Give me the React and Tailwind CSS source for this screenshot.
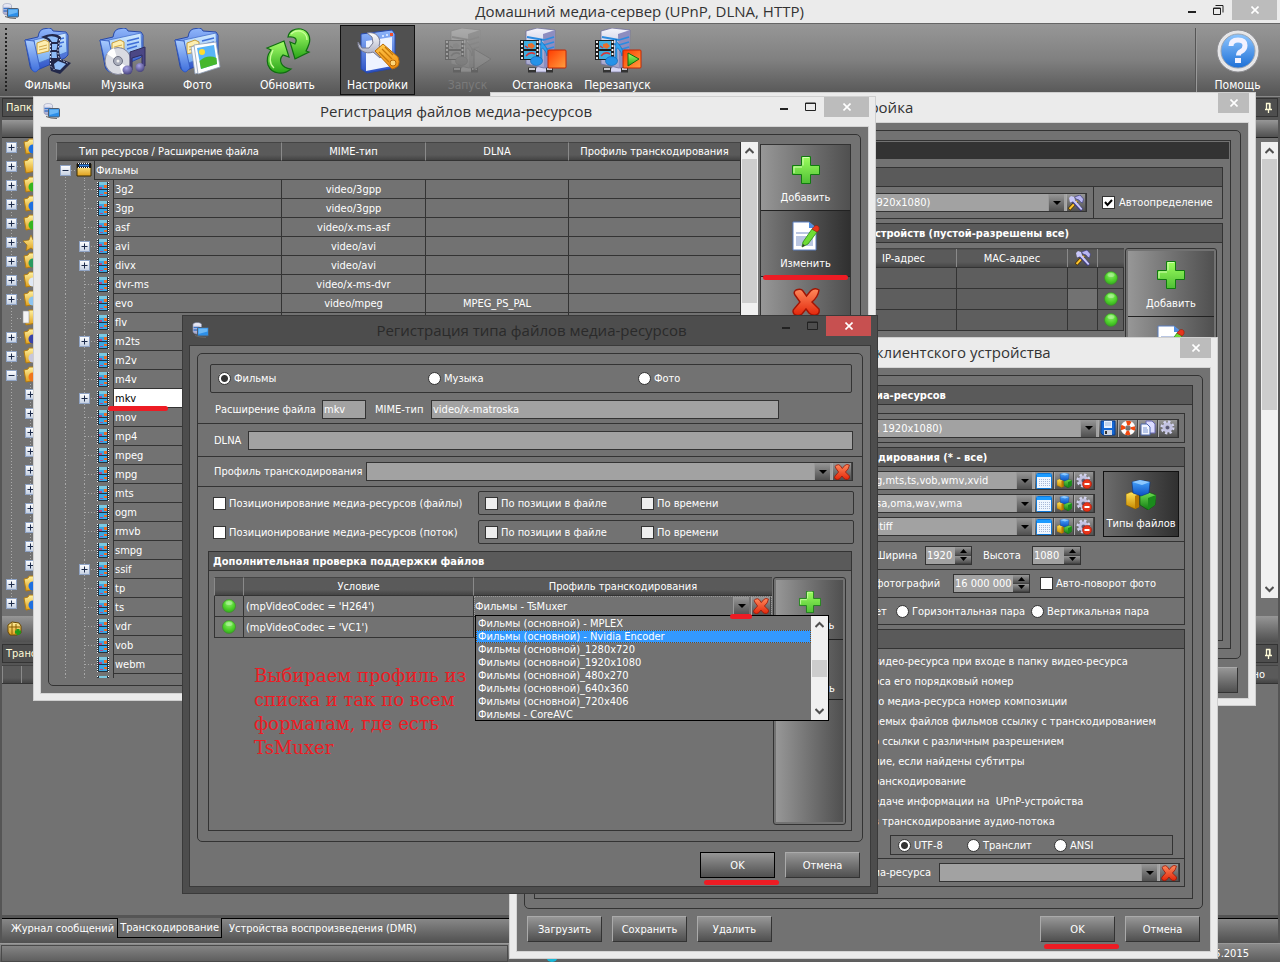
import React from "react";

/* ---------- shared gradients ---------- */

function Gradients() {
  const stops = (id, a, b, x2 = "0", y2 = "1") => (
    <linearGradient id={id} x1="0" y1="0" x2={x2} y2={y2}>
      <stop offset="0" stopColor={a} />
      <stop offset="1" stopColor={b} />
    </linearGradient>
  );
  return (
    <svg className="absolute size-0" aria-hidden="true">
      <defs>
        {stops("gBlue", "#a9ccff", "#3f6fdc")}
        {stops("gBlueSide", "#8fb6fb", "#2b50c4")}
        {stops("gSheet", "#d5ecff", "#6fa8f2")}
        {stops("gGreen", "#a6ff6b", "#27a417")}
        {stops("gRed", "#ff8a5c", "#e2260a")}
        {stops("gStop", "#ff3b00", "#ffa040", "1", "1")}
        {stops("gMetal", "#ffffff", "#9da0b8")}
        {stops("gTower", "#f4f4fb", "#9fa0c8")}
        {stops("gGold", "#fff2a0", "#e0a01c")}
        {stops("gOrange", "#ffc94d", "#ef8a0c")}
        {stops("gHelp", "#8ec6ff", "#1d6fd6")}
        {stops("gCubeB", "#4aa8ff", "#0b4fc0")}
        {stops("gCubeY", "#ffe25a", "#c98a00")}
        {stops("gCubeG", "#6fe052", "#117a12")}
        {stops("gPlus", "#9cff5e", "#4fbf35")}
        {stops("gBox", "#ffffff", "#c3cfe2")}
        <radialGradient id="gBall" cx=".5" cy=".3" r=".7">
          <stop offset="0" stopColor="#8cec6c" />
          <stop offset=".6" stopColor="#4ed12a" />
          <stop offset="1" stopColor="#35a820" />
        </radialGradient>
        <radialGradient id="gNote" cx=".4" cy=".3" r=".8">
          <stop offset="0" stopColor="#a8a4e8" />
          <stop offset="1" stopColor="#3b376f" />
        </radialGradient>
      </defs>
    </svg>
  );
}

/* ---------- icons ---------- */

const AppIcon = () => (
  <svg width="17" height="17" viewBox="0 0 17 17" aria-hidden="true">
    <path d="M1 2.500c0-2.500 8.500-2.500 8.500 0v8c0 2.500-8.500 2-8.500-1z" fill="url(#gTower)" stroke="#8a93b4" strokeWidth=".6" />
    <path d="M1.500 5.500h6M1.500 8h5" stroke="#3b74c8" strokeWidth="1.400" />
    <rect x="5.500" y="5.500" width="11" height="8.500" rx="1" fill="#2d8fe8" stroke="#4e5d6e" />
    <path d="M6.500 6.500h9v3l-9 2.500z" fill="#6cb8f6" />
    <path d="M3 13.500l5 1.500 6 .5" fill="none" stroke="#666" />
  </svg>
);

const FolderShape = () => (
  <>
    <path d="M1 12l13-3 1-4q1-3 4-4l6-1q3 0 4 3l13 1 2 3v20l-3 3-30 13q-4 0-5-5z" fill="url(#gBlueSide)" stroke="#2748a8" />
    <path d="M10 12l32-7 1 19-31 12z" fill="url(#gSheet)" stroke="#4470cc" strokeWidth=".8" />
    <path d="M13 15l8-3 4 2v9l-12 3z" fill="#fdeeb0" stroke="#c79c3a" />
    <path d="M15 19l8-2M15 22l8-2" stroke="#d2aa4c" />
    <path d="M28 13l12-3M28 17l12-3M28 21l10-3" stroke="#3f6fd8" strokeWidth="1.400" />
    <path d="M1 12l9 1 6 27-4 4q-4 0-5-5z" fill="url(#gBlue)" stroke="#2f56bd" strokeWidth=".8" />
  </>
);

const FilmsIcon = () => (
  <svg width="48" height="48" viewBox="0 0 48 48" aria-hidden="true">
    <FolderShape />
    <path d="M17 9q13-6 20 0c-2 9-3 14 0 22l10 4-11 11-9-3c-3-10 0-18-1-28-2-4-5-4-9-6z" fill="#22284a" />
    <path d="M23 9q6-2 11 1l-1 4h-5q-1-3-5-5zM28 16h5.500l-1 6H28zM27.500 24h5l.5 6h-5.500zM30 36l4-3 8 3-6 6-5-1z" fill="#8fbdf8" />
    <path d="M26.500 14v24l5 5M35.500 11c-1 9-3 13 0 20l8 4" fill="none" stroke="#dfe8ff" strokeWidth="1" strokeDasharray="1.500 2" />
  </svg>
);

const MusicIcon = () => (
  <svg width="48" height="48" viewBox="0 0 48 48" aria-hidden="true">
    <FolderShape />
    <ellipse cx="19" cy="33" rx="13" ry="13.500" fill="#d9dbe2" stroke="#83869a" />
    <path d="M19 33L8 26a13 13 0 0 1 7-6zM19 33l11 7a13 13 0 0 1-7 6z" fill="#fff" />
    <circle cx="19" cy="33" r="4.500" fill="#a8acba" stroke="#6c7082" />
    <circle cx="19" cy="33" r="1.500" fill="#eee" />
    <path d="M31 24l15-5v19h-3V27l-10 3v12h-2z" fill="#4b4785" stroke="#302d5c" />
    <ellipse cx="28.500" cy="42" rx="5" ry="4.500" fill="url(#gNote)" />
    <ellipse cx="41" cy="39.500" rx="4.500" ry="4.500" fill="url(#gNote)" />
  </svg>
);

const PhotoIcon = () => (
  <svg width="48" height="48" viewBox="0 0 48 48" aria-hidden="true">
    <FolderShape />
    <path d="M17 19l6-2 4 27-6 2z" fill="#f4f7fb" stroke="#8fa0b8" strokeWidth=".8" />
    <path d="M20 17l22-3 4 25-22 7z" fill="#fff" stroke="#8fa0b8" strokeWidth=".8" />
    <path d="M23 20l17-3 3 19-16 5z" fill="#58b4f8" />
    <path d="M25.500 33q8-7 17-3l.5 6-16 5z" fill="#46b72c" />
    <circle cx="28" cy="24" r="3" fill="#ffdc2e" />
  </svg>
);

const RefreshIcon = () => (
  <svg width="48" height="48" viewBox="0 0 48 48" aria-hidden="true">
    <path d="M24 9C25 3 31 0 37 1c8 2 10 9 8 15-1 3-2 5-3 7l3 1-14 7-5-17 5 2c3-5 0-8-7-7z" fill="url(#gGreen)" stroke="#0f6d10" strokeWidth="1.200" />
    <path d="M27 6q4-4 9-3 7 2 7 9" fill="none" stroke="#caff9c" strokeWidth="1.300" />
    <path d="M27 41c-7 6-19 6-23-4-2-6 0-11 3-15l-4-2 17-7 5 16-6-2c-5 5-2 13 8 14z" fill="url(#gGreen)" stroke="#0f6d10" strokeWidth="1.200" />
    <path d="M9 22q-6 12 1 18" fill="none" stroke="#caff9c" strokeWidth="1.300" />
  </svg>
);

const SettingsIcon = () => (
  <svg width="48" height="48" viewBox="0 0 48 48" aria-hidden="true">
    <path d="M7 6l31-4 3 4v34l-28 5-6-4z" fill="url(#gBlueSide)" stroke="#2748a8" />
    <path d="M12 13l26-4v29l-26 5z" fill="#eef3ff" />
    <path d="M28 8l2 0M32 7h2" stroke="#cfe0ff" strokeWidth="2" />
    <path d="M36 6.500h3" stroke="#f0502c" strokeWidth="3" />
    <path d="M4 14l4 6h7l4-5-1-6-5-4c9-2 15 5 12 13l6 6-5 6-7-6C12 27 3 22 4 14z" fill="url(#gMetal)" stroke="#777a90" />
    <path d="M21 23l8-7 15 13q4 10-6 12z" fill="url(#gOrange)" stroke="#b86a06" />
    <path d="M25 24l10 10M28 21l10 10M31 19l8 8" stroke="#c67808" strokeWidth="1.300" />
    <circle cx="39" cy="35" r="3" fill="#ffd778" stroke="#b86a06" />
  </svg>
);

const ServerIcon = ({ badge }) => (
  <svg width="48" height="48" viewBox="0 0 48 48" aria-hidden="true" className={badge === "run" ? "opacity-25 grayscale" : ""}>
    <path d="M14 40h4v-3h8v3h4v4H12v-4z" fill="#d6d6f4" stroke="#77779c" strokeWidth=".7" />
    <path d="M9 42h8M27 42h7" stroke="#333" strokeWidth="5" />
    <path d="M10 41h6M28 41h5" stroke="#c9c9d0" strokeWidth="2" />
    <path d="M7 3l11-3 18 2-1 35-10 3-18-4z" fill="url(#gTower)" stroke="#70709c" strokeWidth=".8" />
    <path d="M24 6l12-4-1 35-10 3z" fill="#8d8dc0" />
    <path d="M8 9l17 3M8 14l17 3M25 12l10-3M25 17l10-3M25 22l10-3" stroke="#2b8be0" strokeWidth="1.800" />
    <path d="M1 12h19v20H1z" fill="#1d1d1d" />
    <path d="M3 13v18M18.500 13v18" stroke="#fff" strokeWidth="1.800" strokeDasharray="2 2" />
    <path d="M5 13h12v8H5zM5 23h12v8H5z" fill="#3faee0" />
    <path d="M9 16l4-1 3 3-3 3-4-2z" fill="#e8702c" />
    <path d="M6 18l3 2M7 28q4-5 9-2" stroke="#d33a3a" strokeWidth="1.500" fill="none" />
    <path d="M22 11c1 6 9 8 6 17-1-5-3-7-5-8v13h-2z" fill="#2ea2f0" stroke="#0e62ac" strokeWidth=".6" />
    <ellipse cx="17.500" cy="33" rx="6" ry="4.500" fill="#2592e8" stroke="#0e62ac" strokeWidth=".6" />
    {badge === "run" && <path d="M30 21l17 10-17 11z" fill="#aaa" stroke="#555" />}
    {badge !== "run" && <rect x="29" y="22" width="18" height="18" rx="1" fill="url(#gStop)" stroke="#c22606" />}
    {badge === "restart" && <path d="M34 25l11 6-11 7z" fill="url(#gGreen)" stroke="#0f6d10" />}
  </svg>
);

const HelpIcon = () => (
  <svg width="46" height="46" viewBox="0 0 46 46" aria-hidden="true">
    <circle cx="23" cy="23" r="21" fill="#e6e6e8" stroke="#8c8c90" />
    <circle cx="23" cy="23" r="17" fill="url(#gHelp)" stroke="#9aa4b2" />
    <path d="M16 18q0-6 7-6t7 5.500q0 4-4 6-2.500 1-2.500 4" fill="none" stroke="#f2f2ff" strokeWidth="5" />
    <rect x="20" y="30" width="6" height="5" fill="#f2f2ff" />
  </svg>
);

const PlusIcon = ({ size = 28 }) => (
  <svg width={size} height={size} viewBox="0 0 28 28" aria-hidden="true">
    <path d="M9.500 .5h9v9h9v9h-9v9h-9v-9h-9v-9h9z" fill="url(#gPlus)" stroke="#107a10" />
    <path d="M11 9.500v-8h6M2 17v-6h8" fill="none" stroke="#d5ffb4" />
  </svg>
);

const EditIcon = () => (
  <svg width="28" height="30" viewBox="0 0 28 30" aria-hidden="true">
    <path d="M1 1h16l7 6v22H1z" fill="#fff" stroke="#5b7fc0" />
    <path d="M17 1l7 6h-7z" fill="#4f8de0" />
    <path d="M4 11h14v2H4zM4 15h17v10H4z" fill="#b9c6e2" />
    <path d="M11 21l9-13 5 3-9 12-6 3z" fill="#6fdc34" stroke="#2a8a12" strokeWidth=".8" />
    <path d="M20 8q4-6 7-2 1 3-2 5z" fill="#e6351c" stroke="#9c1c0a" strokeWidth=".6" />
    <path d="M10 26l1-3 2 1.500z" fill="#333" />
  </svg>
);

const DeleteIcon = ({ size = 28 }) => (
  <svg width={size} height={size} viewBox="0 0 28 28" aria-hidden="true">
    <path
      d="M4 2q5-2 7 1l3.500 5 4-5q4-4 8.500-1-1 7-7 12l7 7q1 5-3 6-4 1-7-2l-3-4-4 5q-4 3-8 0-2-3 0-5l6-7-5-7q-2-3 1-5z"
      fill="url(#gRed)"
      stroke="#a01404"
      strokeWidth="1.400"
    />
  </svg>
);

const ToolsIcon = () => (
  <svg width="16" height="16" viewBox="0 0 16 16" aria-hidden="true">
    <path d="M1 14.500L9 6" stroke="#4a3300" strokeWidth="3.500" />
    <path d="M1.500 14L9 6" stroke="#ffc52e" strokeWidth="2" />
    <path d="M6.500 2l5.500-2 3.500 4-1 4-2-1-1.500-2-3-1z" fill="#b8b6f2" stroke="#3f3d80" strokeWidth=".7" />
    <path d="M4 5l10 10" stroke="#3f3d80" strokeWidth="3.500" />
    <path d="M1 3l2-2 3 1 1 3 7.500 9-1.500 1-8-8.500-3 1z" fill="#c9c8fa" />
  </svg>
);

const SaveIcon = () => (
  <svg width="16" height="16" viewBox="0 0 16 16" aria-hidden="true">
    <path d="M1 1h14v14H3l-2-2z" fill="#1467d4" stroke="#0a3c8a" />
    <path d="M4 1h8v7H4z" fill="#e6f1ff" />
    <path d="M5 3h6M5 5h6" stroke="#9fb8dc" />
    <path d="M4 10h8v5H4z" fill="#cfd6e4" />
    <path d="M5 11h2v3H5z" fill="#333" />
  </svg>
);

const LifebuoyIcon = () => (
  <svg width="16" height="16" viewBox="0 0 16 16" aria-hidden="true">
    <circle cx="8" cy="8" r="5" fill="none" stroke="#fff" strokeWidth="4.500" />
    <circle cx="8" cy="8" r="5" fill="none" stroke="#f2480e" strokeWidth="4.500" strokeDasharray="4 3.850" strokeDashoffset="2" />
  </svg>
);

const CopyIcon = () => (
  <svg width="16" height="16" viewBox="0 0 16 16" aria-hidden="true">
    <path d="M6 1h6l3 3v9H6z" fill="#dcdcff" stroke="#6b69b4" />
    <path d="M1 4h6l3 3v8H1z" fill="#f3f6ff" stroke="#4d68ad" />
    <path d="M3 8h4M3 10h5M3 12h5" stroke="#7b96d4" />
  </svg>
);

const GearIcon = ({ minus }) => (
  <svg width="16" height="16" viewBox="0 0 16 16" aria-hidden="true">
    <circle cx="7.500" cy="7.500" r="5.500" fill="none" stroke="#d4d4f0" strokeWidth="3" strokeDasharray="2.200 2.100" />
    <circle cx="7.500" cy="7.500" r="3.600" fill="none" stroke="#c3c3e2" strokeWidth="3" />
    <circle cx="7.500" cy="7.500" r="1.500" fill="#55557a" />
    {minus && <circle cx="11" cy="11" r="4.500" fill="#e8351a" stroke="#a81806" strokeWidth=".6" />}
    {minus && <path d="M8.500 11h5" stroke="#fff" strokeWidth="2" />}
  </svg>
);

const CalendarIcon = () => (
  <svg width="16" height="16" viewBox="0 0 16 16" aria-hidden="true">
    <rect x=".5" y=".5" width="15" height="15" rx="1" fill="#eef6ff" stroke="#0f78d8" />
    <path d="M1 1h14v3H1z" fill="#1b9bff" />
    <path d="M3 6.500h11M3 8.500h11M3 10.500h11M3 12.500h11" stroke="#a9b9d8" strokeDasharray="1 1" />
  </svg>
);

const CubesIcon = ({ size = 16 }) => (
  <svg width={size} height={size} viewBox="0 0 30 30" aria-hidden="true">
    <path d="M0 14l5-2 8 2v13l-4 2-9-4z" fill="url(#gCubeY)" stroke="#7a5600" strokeWidth=".6" />
    <path d="M9 16l4-2v13l-4 2z" fill="#b87800" />
    <path d="M14 15l8-3 8 3-1 10-7 5-8-5z" fill="url(#gCubeG)" stroke="#0a4a0a" strokeWidth=".6" />
    <path d="M22 18l8-3-1 10-7 5z" fill="#1a8a1c" />
    <path d="M6 2l8-2 10 2-1 11-8 3-8-3z" fill="url(#gCubeB)" stroke="#052f80" strokeWidth=".6" />
    <path d="M6 2l8-2 10 2-8 3z" fill="#8cc8ff" />
  </svg>
);

const BallIcon = () => (
  <svg width="14" height="14" viewBox="0 0 14 14" aria-hidden="true">
    <circle cx="7" cy="7" r="6.500" fill="url(#gBall)" stroke="#3d8a2c" strokeWidth=".6" />
    <ellipse cx="7" cy="4" rx="3.500" ry="2" fill="#d8ffc8" opacity=".4" />
  </svg>
);

const PinIcon = () => (
  <svg width="9" height="11" viewBox="0 0 9 11" aria-hidden="true">
    <path d="M2.500 7V1.500h3V7M1 7.500h7M4.500 8v3M6 1v6" fill="none" stroke="#fffbd8" strokeWidth="1.300" />
  </svg>
);

const Chevron = ({ down }) => (
  <svg width="9" height="7" viewBox="0 0 9 7" aria-hidden="true">
    <path d={down ? "M.5 1l4 4 4-4" : "M.5 6l4-4 4 4"} fill="none" stroke="#505050" strokeWidth="2" />
  </svg>
);

const Expander = ({ x, y, open }) => (
  <g>
    <rect x={x - 5} y={y - 5} width="10" height="10" fill="url(#gBox)" stroke="#8fa3c4" />
    <path d={`M${x - 3} ${y}h6${open ? "" : `M${x} ${y - 3}v6`}`} stroke="#1d2b4a" strokeWidth="1" fill="none" />
  </g>
);

/* ---------- small controls ---------- */

const TEXT = "font-['DejaVu_Sans_Condensed','DejaVu_Sans',sans-serif] text-[11px] leading-[13px] text-white";
const STEEL = "bg-linear-to-b from-[#979797] to-[#505050]";
const CHECK =
  "size-[13px] shrink-0 appearance-none border border-[#333] checked:bg-[linear-gradient(45deg,transparent_40%,#000_40%,#000_55%,transparent_55%)]";
const RADIO =
  "size-[13px] shrink-0 appearance-none rounded-full border border-[#333] bg-white checked:bg-[radial-gradient(circle,#333_0_3px,#fff_4px)]";

const Radio = ({ name, label, defaultChecked, className = "" }) => (
  <label className={`flex items-center gap-[3px] whitespace-nowrap ${className}`}>
    <input type="radio" name={name} defaultChecked={defaultChecked} className={RADIO} />
    {label}
  </label>
);

const Check = ({ label, dim, className = "" }) => (
  <label className={`flex items-center gap-[3px] whitespace-nowrap ${className}`}>
    <input type="checkbox" className={`${CHECK} ${dim ? "bg-[#eee]" : "bg-white"}`} />
    {label}
  </label>
);

const Mini = ({ label, children }) => (
  <button type="button" aria-label={label} className={`flex w-[20px] shrink-0 items-center justify-center self-stretch border-x border-l-[#aaa] border-r-[#444] ${STEEL}`}>
    {children}
  </button>
);

const Combo = ({ value, label, id, children, className = "" }) => (
  <div className={`flex h-[19px] border border-[#333] bg-[#a2a2a2] ${className}`}>
    <select id={id} aria-label={label} className="min-w-0 flex-1 appearance-none bg-transparent pl-1 leading-[13px] outline-none">
      <option>{value}</option>
    </select>
    <Arrow />
    {children}
  </div>
);

const Arrow = () => (
  <span className={`mr-[2px] flex w-[16px] shrink-0 items-center justify-center border-l border-[#999] ${STEEL}`}>
    <svg width="8" height="4" viewBox="0 0 8 4" aria-hidden="true">
      <path d="M0 0h8L4 4z" fill="#000" />
    </svg>
  </span>
);

const Spin = ({ id, value, className }) => (
  <div className={`flex h-[19px] border border-[#333] bg-[#a2a2a2] ${className}`}>
    <input id={id} defaultValue={value} className="min-w-0 flex-1 bg-transparent pl-px outline-none" />
    <span className="flex w-[16px] shrink-0 flex-col">
      {["M0 4h7L3.500 0z", "M0 0h7L3.500 4z"].map((d) => (
        <span key={d} className={`flex flex-1 items-center justify-center border-b border-[#444] ${STEEL}`}>
          <svg width="7" height="4" viewBox="0 0 7 4" aria-hidden="true">
            <path d={d} />
          </svg>
        </span>
      ))}
    </span>
  </div>
);

const RedLine = ({ className }) => <span className={`absolute h-[5px] rounded-full bg-[#ed1c24] ${className}`} />;

const PushButton = ({ children, primary, line, wide }) => (
  <div className="relative shrink-0">
    <button
      type="button"
      className={`h-[26px] border ${wide ? "w-[90px]" : "w-[75px]"} ${
        primary ? "border-black" : "border-t-[#aaa] border-r-[#333] border-b-[#333] border-l-[#aaa]"
      } ${STEEL}`}
    >
      {children}
    </button>
    {line && <RedLine className="-bottom-[7px] left-1 w-[75px]" />}
  </div>
);

const SideButton = ({ icon, label, pressed, line, className }) => (
  <button
    type="button"
    className={`relative flex w-full shrink-0 flex-col items-center justify-between border-b border-[#222] bg-linear-to-r ${
      pressed ? "from-[#7a7a7a] to-[#303030]" : "from-[#979797] to-[#505050]"
    } ${className}`}
  >
    {icon}
    {label}
    {line && <RedLine className="-bottom-[4px] left-[2px] z-10 w-[85px]" />}
  </button>
);

const Scrollbar = ({ thumb, className = "" }) => (
  <div className={`flex shrink-0 flex-col items-center bg-[#f0f0f0] ${className}`}>
    <span className="flex h-[17px] shrink-0 items-center">
      <Chevron />
    </span>
    <span className="flex w-[15px] min-h-0 flex-1 flex-col">
      <span className={`bg-[#cdcdcd] ${thumb}`} />
    </span>
    <span className="flex h-[17px] shrink-0 items-center">
      <Chevron down />
    </span>
  </div>
);

const Controls = ({ full, restore, dark, wide }) => (
  <div className="flex items-start justify-end">
    {full && (
      <>
        <button type="button" aria-label="Свернуть" className="flex h-[20px] w-[27px] items-center justify-center">
          <span className="mt-[3px] h-[2px] w-[8px] bg-[#222]" />
        </button>
        <button type="button" aria-label="Развернуть" className="flex h-[20px] w-[27px] items-center justify-center">
          <svg width="11" height="10" viewBox="0 0 11 10" aria-hidden="true">
            {restore ? <path d="M.5 3h7v6.500h-7zM.5 3.500h7M2.500 .5h7.500v7" fill="none" stroke="#222" /> : <path d="M.5 1h10v7.500H.5zM.5 1.500h10" fill="none" stroke="#222" />}
          </svg>
        </button>
      </>
    )}
    <button
      type="button"
      aria-label="Закрыть"
      className={`flex h-[20px] items-center justify-center ${wide ? "w-[45px]" : "w-[31px]"} ${dark ? "bg-[#c75050]" : "bg-[#bcbcbc]"}`}
    >
      <svg width="8" height="8" viewBox="0 0 8 8" aria-hidden="true">
        <path d="M.5 .5l7 7M7.500 .5l-7 7" stroke="#fff" strokeWidth="1.600" />
      </svg>
    </button>
  </div>
);

const TITLE = "font-['Open_Sans','Noto_Sans',sans-serif] text-[15px] leading-[20px] whitespace-nowrap";

const Win = ({ title, icon, dark, full, className, children }) => (
  <section
    aria-label={title}
    className={`absolute flex flex-col border ${dark ? "border-[#3a3a3a] bg-[#4d4d4d]" : "border-[#cfcfcf] bg-[#ebebeb]"} ${className}`}
  >
    <header className={`grid h-[29px] shrink-0 grid-cols-[1fr_auto_1fr] pr-[6px] pl-[9px] ${dark ? "text-[#2a2a2a]" : "text-[#333]"}`}>
      <span className="pt-[6px]">{icon && <AppIcon />}</span>
      <h2 className={`pt-[4px] ${TITLE}`}>{title}</h2>
      <Controls full={full} dark={dark} wide={full} />
    </header>
    <div className={`mx-[6px] mb-[6px] flex min-h-0 flex-1 flex-col border bg-[#727272] p-[7px] ${dark ? "border-[#3a3a3a]" : "border-[#d4d4d4]"}`}>
      {children}
    </div>
  </section>
);

const GroupHead = ({ children, className = "" }) => (
  <h3 className={`h-[19px] shrink-0 border-b border-[#333] bg-[#5a5a5a] pt-[3px] font-bold whitespace-nowrap ${className}`}>{children}</h3>
);

const TH = "border-l border-l-[#8a8a8a] border-b border-b-[#333] border-t border-t-[#444] bg-linear-to-b from-[#5a5a5a] from-70% to-[#444] p-0 text-center font-normal";

/* ---------- main window ---------- */

const ToolButton = ({ icon, label, active, disabled, className = "" }) => (
  <button
    type="button"
    disabled={disabled}
    className={`flex h-[70px] w-[75px] shrink-0 flex-col items-center justify-between border pt-[2px] pb-[2px] text-[12px] leading-[14px] ${
      active ? "border-[#111] bg-[#505050]" : "border-transparent"
    } ${disabled ? "text-[#7a7a7a]" : ""} ${className}`}
  >
    {icon}
    {label}
  </button>
);

const FOLDER_BADGES = ["#1d6fe0", null, "#35b520", "#1d6fe0", "#35b520", "star", "#2a9a60", "#dfe8f4", "#8cc4f0", "doc", "#3a44a8", "#c8c8dc", "#f0761c"];

const SideTreeIcon = ({ badge, y }) =>
  badge === "star" ? (
    <path d={`M29 ${y - 7}l2 5 6 1-5 4 1 6-4-3-5 3 1-6-4-4 6-1z`} fill="url(#gGold)" stroke="#a8740c" strokeWidth=".7" />
  ) : (
    <g>
      <path d={`M22 ${y - 5}l4-1 1-2h7v13l-10 2z`} fill="url(#gGold)" stroke="#b47c10" />
      {badge === "doc" && <path d={`M21 ${y - 7}h6v12h-6z`} fill="#f4f4f4" stroke="#999" strokeWidth=".6" />}
      {badge && badge !== "doc" && <circle cx="31" cy={y + 2} r="4.500" fill={badge} />}
    </g>
  );

const SideTree = () => (
  <svg width="36" height="477" viewBox="0 0 36 477" aria-hidden="true">
    <path d="M9.500 8v460" stroke="#aaa" strokeDasharray="1 2" />
    <path d="M28.500 246v182" stroke="#aaa" strokeDasharray="1 2" />
    {FOLDER_BADGES.map((b, i) => (
      <g key={i}>
        <path d={`M15 ${9.5 + i * 19}h6`} stroke="#aaa" strokeDasharray="1 2" />
        {b !== "doc" && <Expander x={9.5} y={9.5 + i * 19} open={i === 12} />}
        <SideTreeIcon badge={b} y={9 + i * 19} />
      </g>
    ))}
    {Array.from({ length: 10 }, (_, i) => (
      <Expander key={i} x={28.5} y={256.5 + i * 19} />
    ))}
    {[446, 465].map((y) => (
      <g key={y}>
        <Expander x={9.5} y={y + 0.5} />
        <SideTreeIcon badge="#1d6fe0" y={y} />
      </g>
    ))}
  </svg>
);

const DockHead = ({ children }) => (
  <div className="flex h-[19px] shrink-0 items-center justify-between border border-[#333] bg-[#4e4e4e] pr-[4px] pl-[3px] text-[#fffbd8]">
    {children}
    <PinIcon />
  </div>
);

function MainWindow() {
  return (
    <main className="flex min-h-screen flex-col bg-[#555]">
      <header className="grid h-[24px] shrink-0 grid-cols-[1fr_auto_1fr] border-b border-[#666] bg-[#ebebeb] pr-[3px] pl-[2px] text-[#333]">
        <span className="pt-[3px]">
          <AppIcon />
        </span>
        <h1 className={`pt-px ${TITLE}`}>Домашний медиа-сервер (UPnP, DLNA, HTTP)</h1>
        <Controls full restore wide />
      </header>
      <nav className="flex h-[73px] shrink-0 items-start border-b border-[#888] bg-linear-to-b from-[#979797] via-[#808080] to-[#555] pt-px">
        <span className="mt-[3px] ml-[5px] h-[63px] w-[5px] border-l-2 border-dotted border-[#222]" />
        <ToolButton icon={<FilmsIcon />} label="Фильмы" />
        <ToolButton icon={<MusicIcon />} label="Музыка" />
        <ToolButton icon={<PhotoIcon />} label="Фото" />
        <ToolButton icon={<RefreshIcon />} label="Обновить" className="mx-[15px]" />
        <ToolButton icon={<SettingsIcon />} label="Настройки" active className="mr-[15px]" />
        <ToolButton icon={<ServerIcon badge="run" />} label="Запуск" disabled />
        <ToolButton icon={<ServerIcon badge="stop" />} label="Остановка" />
        <ToolButton icon={<ServerIcon badge="restart" />} label="Перезапуск" />
        <span className="mt-[3px] mr-[3px] ml-auto h-[66px] w-[2px] border-r border-[#999] bg-[#555]" />
        <ToolButton icon={<HelpIcon />} label="Помощь" className="mr-[5px]" />
      </nav>

      <div className="flex h-[545px] shrink-0 flex-col px-[2px] pt-px">
        <DockHead>Папки</DockHead>
        <div className={`mt-[3px] h-[18px] shrink-0 border-b border-[#222] ${STEEL}`} />
        <div className="flex min-h-0 flex-1 justify-between bg-[#727272]">
          <SideTree />
          <Scrollbar thumb="h-[251px]" className="mt-[4px] mb-[18px] w-[17px]" />
        </div>
        <div className={`flex h-[26px] shrink-0 items-center pl-[5px] ${STEEL}`}>
          <svg width="28" height="16" viewBox="0 0 28 16" aria-hidden="true">
            <path d="M1 4l4-3 7 1 2 3v7l-4 2H3l-2-3z" fill="url(#gGold)" stroke="#6b4800" />
            <path d="M2 6h11M5 2v11M9 3v10" stroke="#8a5c00" />
            <path d="M8 11h6M11 8v6" stroke="#1f9a1a" strokeWidth="3" />
            <rect x="26" y="4" width="2" height="9" fill="#c8922c" />
          </svg>
        </div>
      </div>

      <div className="flex min-h-[200px] flex-1 flex-col px-[2px] pt-[2px]">
        <DockHead>Транскодирование</DockHead>
        <div className="mt-[2px] flex h-[19px] shrink-0 items-center border-t border-b border-t-[#444] border-b-[#333] bg-linear-to-b from-[#5a5a5a] from-70% to-[#444] pr-[13px]">
          <span className="h-full w-[20px] border-x border-[#8a8a8a]" />
          <span className="ml-auto">Окончено</span>
        </div>
        <div className="flex-1 bg-[#727272]" />
        <div className="mt-[3px] flex h-[25px] shrink-0 items-start bg-linear-to-b from-[#8a8a8a] to-[#505050]">
          <button type="button" className="h-[20px] border-t border-black pr-[3px] pl-[9px]">
            Журнал сообщений
          </button>
          <button type="button" className="h-[20px] border-x border-b border-black bg-[#6a6a6a] px-[2px]">
            Транскодирование
          </button>
          <button type="button" className="h-[20px] flex-1 border-t border-black pl-[7px] text-left">
            Устройства воспроизведения (DMR)
          </button>
        </div>
      </div>
      <footer className="flex h-[19px] shrink-0 items-center border-t border-[#999] bg-linear-to-b from-[#8a8a8a] to-[#5c5c5c] pr-[31px]">
        <span className="ml-px h-[17px] w-[507px] border border-[#4a4a4a]" />
        <span className="ml-[38px] size-[12px] self-end rounded-full bg-[#19b8d8]" />
        <time className="ml-auto">23.05.2015</time>
      </footer>
    </main>
  );
}

/* ---------- device list window ---------- */

const StripFrame = ({ className, children }) => (
  <div className={`flex shrink-0 flex-col rounded-[3px] border border-[#333] bg-[#727272] p-[2px] ${className}`}>{children}</div>
);

function DevicesWindow() {
  return (
    <Win title="Настройка" className="top-[92px] left-[490px] h-[614px] w-[766px]">
      <div className="flex h-[529px] shrink-0 flex-col rounded-[5px] border border-[#333] p-[9px]">
        <div className="flex flex-1 flex-col border border-[#333]">
          <div className="m-px h-[17px] shrink-0 bg-[#333]" />
          <div className="mt-[7px] mr-[7px] ml-[7px] border border-[#333]">
            <GroupHead />
            <div className="flex h-[31px] items-stretch">
              <div className="flex flex-1 items-center pr-[6px] pl-[300px]">
                <Combo value=", 1920x1080)" label="Устройство по умолчанию" className="flex-1 pl-[35px]">
                  <Mini label="Настройки устройства">
                    <ToolsIcon />
                  </Mini>
                </Combo>
              </div>
              <label className="flex w-[129px] items-center gap-[4px] border-l border-[#333] pl-[8px]">
                <span className="relative flex">
                  <input type="checkbox" defaultChecked className="size-[13px] appearance-none border border-[#333] bg-white" />
                  <svg className="pointer-events-none absolute inset-0" width="13" height="13" viewBox="0 0 13 13" aria-hidden="true">
                    <path d="M3 6l2.500 3L10 4" fill="none" stroke="#000" strokeWidth="2" />
                  </svg>
                </span>
                Автоопределение
              </label>
            </div>
          </div>
          <div className="mx-[7px] mt-[4px] mb-[7px] flex flex-1 flex-col border border-[#333]">
            <GroupHead className="pr-[153px] text-right">Список разрешенных устройств (пустой-разрешены все)</GroupHead>
            <div className="flex flex-1 justify-end gap-px pt-[5px] pr-[5px] pb-[4px]">
              <table className="w-[300px] table-fixed border-collapse self-start bg-[#5e5e5e]">
                <colgroup>
                  <col className="w-[133px]" />
                  <col className="w-[111px]" />
                  <col className="w-[30px]" />
                  <col className="w-[26px]" />
                </colgroup>
                <thead>
                  <tr className="h-[19px]">
                    <th className={`${TH} pl-[27px]!`}>IP-адрес</th>
                    <th className={TH}>MAC-адрес</th>
                    <th className={TH}>
                      <span className="flex justify-center">
                        <ToolsIcon />
                      </span>
                    </th>
                    <th className={TH} />
                  </tr>
                </thead>
                <tbody>
                  {[0, 1, 2].map((r) => (
                    <tr key={r} className="h-[21px]">
                      <td className="border border-[#333]" />
                      <td className="border border-[#333]" />
                      <td className={`border border-[#333] ${r === 1 ? "bg-[#727272]" : ""}`} />
                      <td className="border border-[#333] p-0">
                        <span className="flex justify-center">
                          <BallIcon />
                        </span>
                      </td>
                    </tr>
                  ))}
                </tbody>
              </table>
              <StripFrame className="w-[92px]">
                <SideButton icon={<PlusIcon />} label="Добавить" className="h-[66px] pt-[10px] pb-[6px]" />
                <SideButton icon={<EditIcon />} label="Изменить" className="h-[66px] pt-[8px] pb-[6px]" />
                <div className="flex-1 bg-linear-to-r from-[#979797] to-[#505050]" />
              </StripFrame>
            </div>
          </div>
        </div>
      </div>
      <div className="mt-[8px] flex justify-end pr-[3px]">
        <PushButton wide>Закрыть</PushButton>
      </div>
    </Win>
  );
}

/* ---------- client device window ---------- */

const OPTIONS = [
  "видео-ресурса при входе в папку видео-ресурса",
  "рса его порядковый номер",
  "го медиа-ресурса номер композиции",
  "аемых файлов фильмов ссылку с транскодированием",
  "о ссылки с различным разрешением",
  "ние, если найдены субтитры",
  "ранскодирование",
  "едаче информации на  UPnP-устройства",
  "в транскодирование аудио-потока",
];

function ClientWindow() {
  return (
    <Win title="Настройки медиа-сервера клиентского устройства" className="top-[337px] left-[509px] h-[622px] w-[709px]">
      <div className="flex h-[534px] shrink-0 flex-col rounded-[5px] border border-[#333] p-[9px]">
        <div className="flex flex-1 flex-col border border-[#333]">
          <GroupHead className="pl-[333px]">диа-ресурсов</GroupHead>
          <div className="mx-[7px] mt-[8px] flex h-[30px] items-center border border-[#333] pr-[5px] pl-[328px]">
            <Combo value=", 1920x1080)" label="Профиль устройства" className="flex-1">
              <Mini label="Сохранить профиль">
                <SaveIcon />
              </Mini>
              <Mini label="Восстановить профиль">
                <LifebuoyIcon />
              </Mini>
              <Mini label="Копировать профиль">
                <CopyIcon />
              </Mini>
              <Mini label="Параметры профиля">
                <GearIcon />
              </Mini>
            </Combo>
          </div>

          <div className="mx-[7px] mt-[4px] border border-[#333]">
            <GroupHead className="pl-[335px]">дирования (* - все)</GroupHead>
            <div className="flex h-[75px] gap-[8px] border-b border-[#333] pt-[4px] pr-[5px] pl-[328px]">
              <div className="flex flex-1 flex-col gap-[4px]">
                {[
                  ["g,mts,ts,vob,wmv,xvid", "Фильмы"],
                  ["sa,oma,wav,wma", "Музыка"],
                  [".tiff", "Фото"],
                ].map(([v, l]) => (
                  <Combo key={v} value={v} label={l}>
                    <Mini label="Список">
                      <CalendarIcon />
                    </Mini>
                    <Mini label="Типы">
                      <CubesIcon size={15} />
                    </Mini>
                    <Mini label="Сбросить">
                      <GearIcon minus />
                    </Mini>
                  </Combo>
                ))}
              </div>
              <button
                type="button"
                className="flex h-[66px] w-[76px] flex-col items-center justify-between border border-[#111] bg-linear-to-r from-[#6c6c6c] to-[#303030] pt-[8px] pb-[6px] whitespace-nowrap"
              >
                <CubesIcon size={30} />
                Типы файлов
              </button>
            </div>
            <div className="flex h-[28px] items-center border-b border-[#333] pl-[332px]">
              <label htmlFor="pic-width" className="w-[50px]">
                Ширина
              </label>
              <Spin id="pic-width" value="1920" className="w-[47px]" />
              <label htmlFor="pic-height" className="ml-[11px] w-[49px]">
                Высота
              </label>
              <Spin id="pic-height" value="1080" className="w-[49px]" />
            </div>
            <div className="flex h-[28px] items-center border-b border-[#333] pl-[332px]">
              <label htmlFor="pic-pixels" className="w-[78px]">
                фотографий
              </label>
              <Spin id="pic-pixels" value="16 000 000" className="w-[77px]" />
              <Check label="Авто-поворот фото" className="ml-[10px]" />
            </div>
            <div className="flex h-[26px] items-center pl-[332px]">
              <span className="w-[21px]">ет</span>
              <Radio name="pair" label="Горизонтальная пара" className="w-[135px]" />
              <Radio name="pair" label="Вертикальная пара" />
            </div>
          </div>

          <div className="mx-[7px] mt-[4px] border border-[#333]">
            <GroupHead />
            <ul className="pt-[3px] pl-[330px] whitespace-pre">
              {OPTIONS.map((o) => (
                <li key={o} className="h-[20px] leading-[20px]">
                  {o}
                </li>
              ))}
            </ul>
            <div className="flex h-[27px] items-center border-b border-[#333] pr-[11px] pl-[347px]">
              <div className="flex h-[20px] flex-1 items-center border border-[#333] pl-[7px]">
                <Radio name="charset" label="UTF-8" defaultChecked className="w-[69px]" />
                <Radio name="charset" label="Транслит" className="w-[87px]" />
                <Radio name="charset" label="ANSI" />
              </div>
            </div>
            <div className="flex h-[27px] items-center pr-[4px] pl-[320px]">
              <label htmlFor="res-title" className="w-[76px] pr-[8px] text-right whitespace-nowrap">
                диа-ресурса
              </label>
              <Combo id="res-title" value="" className="flex-1">
                <Mini label="Очистить">
                  <DeleteIcon size={16} />
                </Mini>
              </Combo>
            </div>
          </div>
        </div>
      </div>
      <div className="mt-[7px] flex gap-[10px] px-[3px]">
        <PushButton>Загрузить</PushButton>
        <PushButton>Сохранить</PushButton>
        <PushButton>Удалить</PushButton>
        <div className="flex-1" />
        <PushButton line>OK</PushButton>
        <PushButton>Отмена</PushButton>
      </div>
    </Win>
  );
}

/* ---------- file registration window ---------- */

const FILES = [
  ["3g2", "video/3gpp"],
  ["3gp", "video/3gpp"],
  ["asf", "video/x-ms-asf"],
  ["avi", "video/avi", "", true],
  ["divx", "video/avi", "", true],
  ["dvr-ms", "video/x-ms-dvr"],
  ["evo", "video/mpeg", "MPEG_PS_PAL"],
  ["flv"],
  ["m2ts", "", "", true],
  ["m2v"],
  ["m4v"],
  ["mkv", "", "", true],
  ["mov"],
  ["mp4"],
  ["mpeg"],
  ["mpg"],
  ["mts"],
  ["ogm"],
  ["rmvb"],
  ["smpg"],
  ["ssif", "", "", true],
  ["tp"],
  ["ts"],
  ["vdr"],
  ["vob"],
  ["webm"],
  [""],
];

const RowGuide = ({ plus }) => (
  <svg width="57" height="19" viewBox="0 0 57 19" className="shrink-0" aria-hidden="true">
    <path d="M9.500 0v19M28.500 0v19M29 9.500h10" stroke="#a8a8a8" strokeDasharray="1 2" />
    {plus && <Expander x={28.5} y={9.5} />}
    <rect x="41" y="2" width="12" height="15" fill="#26323c" />
    <path d="M41.500 2v15M52.500 2v15" stroke="#fff" strokeDasharray="1 1" />
    <path d="M43 2h8v7h-8zM43 10h8v6h-8z" fill="#3aa6e4" />
    <path d="M43 2h8v3h-8z" fill="#7cc8e0" />
    <path d="M48 5h3v3h-3zM48 12h3v2h-3z" fill="#e8702c" />
    <path d="M43 7h3v2h-3zM44 14h3v1h-3z" fill="#b04a8c" />
  </svg>
);

function FilesWindow() {
  return (
    <Win title="Регистрация файлов медиа-ресурсов" icon full className="top-[96px] left-[33px] h-[605px] w-[843px]">
      <div className="flex min-h-0 flex-1 rounded-[5px] border border-[#333] py-[7px] pr-[9px] pl-[7px]">
        <div className="min-w-0 flex-1 overflow-hidden">
          <table className="w-full table-fixed border-separate border-spacing-0">
            <colgroup>
              <col className="w-[225px]" />
              <col className="w-[144px]" />
              <col className="w-[143px]" />
              <col />
            </colgroup>
            <thead>
              <tr className="h-[19px]">
                <th className={TH}>Тип ресурсов / Расширение файла</th>
                <th className={TH}>MIME-тип</th>
                <th className={TH}>DLNA</th>
                <th className={TH}>Профиль транскодирования</th>
              </tr>
            </thead>
            <tbody>
              <tr className="h-[19px]">
                <td colSpan={4} className="p-0">
                  <div className="flex h-[19px]">
                    <svg width="38" height="19" viewBox="0 0 38 19" aria-hidden="true">
                      <path d="M9.500 10v9M28.500 17v2M15 9.500h6" stroke="#a8a8a8" strokeDasharray="1 2" />
                      <Expander x={9.5} y={9.5} open />
                      <path d="M21 3h14v12H21z" fill="url(#gGold)" stroke="#3a2a00" />
                      <path d="M21 2h14v5H21z" fill="#111" />
                      <path d="M22 2.500h12M22 6.500h12" stroke="#fff" strokeDasharray="1 1" />
                      <path d="M23 4.500h10" stroke="#2f7fe0" strokeWidth="2" />
                    </svg>
                    <span className="flex-1 border-b border-l border-[#333] pt-[3px] pl-px">Фильмы</span>
                  </div>
                </td>
              </tr>
              {FILES.map(([ext, mime, dlna, plus]) => (
                <tr key={ext} className="h-[19px]">
                  <td className="p-0">
                    <div className="flex h-[19px]">
                      <RowGuide plus={plus} />
                      <span
                        className={`relative flex-1 border-b border-l border-[#333] pt-[3px] pl-px ${ext === "mkv" ? "bg-white text-black" : ""}`}
                      >
                        {ext}
                        {ext === "mkv" && <RedLine className="-bottom-[4px] -left-[6px] z-10 w-[60px]" />}
                      </span>
                    </div>
                  </td>
                  <td className="border-b border-l border-[#333] p-0 text-center">{mime}</td>
                  <td className="border-b border-l border-[#333] p-0 text-center">{dlna}</td>
                  <td className="border-b border-l border-[#333] p-0" />
                </tr>
              ))}
            </tbody>
          </table>
        </div>
        <Scrollbar thumb="h-[144px]" className="w-[18px] border-l border-[#333]" />
        <div className="mt-[2px] ml-[2px] flex w-[91px] shrink-0 flex-col border border-[#333]">
          <SideButton icon={<PlusIcon />} label="Добавить" className="h-[66px] pt-[11px] pb-[6px]" />
          <SideButton icon={<EditIcon />} label="Изменить" pressed line className="h-[66px] pt-[10px] pb-[6px]" />
          <SideButton icon={<DeleteIcon />} label="Удалить" className="h-[66px] pt-[11px] pb-[6px]" />
          <div className="flex-1 bg-linear-to-r from-[#979797] to-[#505050]" />
        </div>
      </div>
    </Win>
  );
}

/* ---------- file type window ---------- */

const PROFILES = [
  "Фильмы (основной) - MPLEX",
  "Фильмы (основной) - Nvidia Encoder",
  "Фильмы (основной)_1280x720",
  "Фильмы (основной)_1920x1080",
  "Фильмы (основной)_480x270",
  "Фильмы (основной)_640x360",
  "Фильмы (основной)_720x406",
  "Фильмы - CoreAVC",
];

const PositionBox = () => (
  <div className="flex h-[24px] flex-1 items-center rounded-[2px] border border-[#333] pl-[6px]">
    <Check label="По позиции в файле" dim className="w-[156px]" />
    <Check label="По времени" dim />
  </div>
);

function ProfileList() {
  return (
    <div className="absolute top-full left-px z-20 -mt-px flex h-[106px] w-[354px] border border-black bg-[#727272]">
      <ul role="listbox" aria-label="Профиль транскодирования" className="min-w-0 flex-1 pt-px">
        {PROFILES.map((p, i) => (
          <li
            key={p}
            role="option"
            aria-selected={i === 1}
            className={`h-[13px] pl-[2px] whitespace-nowrap ${i === 1 ? "bg-[#3399ff] outline-1 -outline-offset-1 outline-[#804a10] outline-dotted" : ""}`}
          >
            {p}
          </li>
        ))}
      </ul>
      <Scrollbar thumb="mt-[27px] h-[17px]" className="w-[17px]" />
    </div>
  );
}

function TypeWindow() {
  const field = "h-[19px] border border-[#333] bg-[#a2a2a2] pl-px outline-none";
  return (
    <Win title="Регистрация типа файлов медиа-ресурсов" icon dark full className="top-[315px] left-[182px] h-[579px] w-[696px]">
      <div className="flex h-[489px] shrink-0 flex-col rounded-[5px] border border-[#333]">
        <div className="mt-[10px] mr-[10px] ml-[12px] flex h-[29px] shrink-0 items-center rounded-[2px] border border-[#333] pl-[7px]">
          <Radio name="kind" label="Фильмы" defaultChecked className="w-[210px]" />
          <Radio name="kind" label="Музыка" className="w-[210px]" />
          <Radio name="kind" label="Фото" />
        </div>
        <div className="flex h-[31px] shrink-0 items-center border-b border-[#333] pt-[2px] pl-[17px]">
          <label htmlFor="ext" className="w-[107px] whitespace-nowrap">
            Расширение файла
          </label>
          <input id="ext" defaultValue="mkv" className={`w-[44px] ${field}`} />
          <label htmlFor="mime" className="ml-[9px] w-[56px]">
            MIME-тип
          </label>
          <input id="mime" defaultValue="video/x-matroska" className={`w-[348px] ${field}`} />
        </div>
        <div className="flex h-[33px] shrink-0 items-center border-b border-[#333] pr-[9px] pl-[16px]">
          <label htmlFor="dlna" className="w-[34px]">
            DLNA
          </label>
          <input id="dlna" className={`min-w-0 flex-1 ${field}`} />
        </div>
        <div className="flex h-[30px] shrink-0 items-center border-b border-[#333] pr-[9px] pl-[16px]">
          <label htmlFor="profile" className="w-[152px] whitespace-nowrap">
            Профиль транскодирования
          </label>
          <Combo id="profile" value="" className="flex-1">
            <Mini label="Очистить">
              <DeleteIcon size={16} />
            </Mini>
          </Combo>
        </div>
        <div className="flex shrink-0 flex-col gap-[5px] pt-[4px] pr-[8px] pl-[15px]">
          <div className="flex items-center">
            <Check label="Позиционирование медиа-ресурсов (файлы)" className="w-[265px]" />
            <PositionBox />
          </div>
          <div className="flex items-center">
            <Check label="Позиционирование медиа-ресурсов (поток)" className="w-[265px]" />
            <PositionBox />
          </div>
        </div>

        <div className="mt-[7px] mr-[10px] mb-[10px] ml-[10px] flex min-h-0 flex-1 flex-col border border-[#333]">
          <GroupHead className="pl-[4px]">Дополнительная проверка поддержки файлов</GroupHead>
          <div className="flex min-h-0 flex-1 gap-px pt-[6px] pr-[5px] pb-[5px] pl-[5px]">
            <div className="flex min-w-0 flex-1 flex-col">
              <table className="w-full table-fixed border-separate border-spacing-0">
                <colgroup>
                  <col className="w-[29px]" />
                  <col className="w-[230px]" />
                  <col />
                </colgroup>
                <thead>
                  <tr className="h-[19px]">
                    <th className={TH} />
                    <th className={TH}>Условие</th>
                    <th className={TH}>Профиль транскодирования</th>
                  </tr>
                </thead>
                <tbody>
                  {["(mpVideoCodec = 'H264')", "(mpVideoCodec = 'VC1')"].map((c, i) => (
                    <tr key={c} className="h-[21px]">
                      <td className="border-b border-l border-[#333] p-0">
                        <span className="flex justify-center">
                          <BallIcon />
                        </span>
                      </td>
                      <td className="border-b border-l border-[#333] p-0 pl-[2px]">{c}</td>
                      <td className="relative border-b border-l border-[#333] p-0">
                        {i === 0 && (
                          <div className="flex h-[20px] border border-dotted border-[#999]">
                            <select aria-label="Профиль" className="min-w-0 flex-1 appearance-none bg-transparent outline-none">
                              <option>Фильмы - TsMuxer</option>
                            </select>
                            <Arrow />
                            <Mini label="Очистить">
                              <DeleteIcon size={16} />
                            </Mini>
                          </div>
                        )}
                        {i === 0 && <ProfileList />}
                        {i === 0 && <RedLine className="right-[20px] -bottom-[3px] z-30 w-[22px]" />}
                      </td>
                    </tr>
                  ))}
                </tbody>
              </table>
              <p className="mt-[26px] ml-[40px] w-[226px] font-['DejaVu_Serif',serif] text-[18px] leading-[24px] text-[#ed1c24]">
                Выбираем профиль из списка и так по всем форматам, где есть TsMuxer
              </p>
            </div>
            <StripFrame className="w-[73px]">
              <SideButton icon={<PlusIcon size={22} />} label="Добавить" className="h-[60px] pt-[11px] pb-[7px]" />
              <SideButton icon={<EditIcon />} label="Изменить" className="h-[60px] pt-[4px] pb-[4px]" />
              <div className="flex-1 bg-linear-to-r from-[#979797] to-[#505050]" />
            </StripFrame>
          </div>
        </div>
      </div>
      <div className="mt-[10px] flex justify-end gap-[10px] pr-[3px]">
        <PushButton primary line>
          OK
        </PushButton>
        <PushButton>Отмена</PushButton>
      </div>
    </Win>
  );
}

export default function App() {
  return (
    <div className={`relative min-h-screen overflow-hidden ${TEXT}`}>
      <Gradients />
      <MainWindow />
      <DevicesWindow />
      <ClientWindow />
      <FilesWindow />
      <TypeWindow />
    </div>
  );
}
